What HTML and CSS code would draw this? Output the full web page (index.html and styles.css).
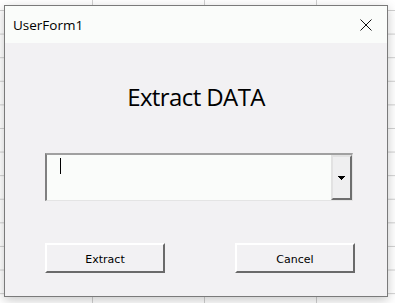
FILE: index.html
```html
<!DOCTYPE html>
<html lang="en">
<head>
  <meta charset="UTF-8" />
  <meta name="viewport" content="width=device-width, initial-scale=1.0"/>
  <title>UserForm1</title>
  <link rel="stylesheet" href="styles.css">
</head>
<body>
  <!-- UserForm window over the sheet grid -->
  <div class="form-window">
    <div class="title-bar">
      <span class="title">UserForm1</span>
      <svg class="close-icon" width="12" height="12" viewBox="0 0 12 12">
        <path d="M0.5 0.5 L11.5 11.5 M11.5 0.5 L0.5 11.5" stroke="#111" stroke-width="1" fill="none"/>
      </svg>
    </div>

    <div class="form-body">
      <h1>Extract DATA</h1>

      <!-- Combo box -->
      <div class="combo">
        <div class="combo-input"><span class="caret"></span></div>
        <div class="combo-button">
          <svg width="7" height="4" viewBox="0 0 7 4" shape-rendering="crispEdges">
            <path d="M0 0 H7 V1 H6 V2 H5 V3 H4 V4 H3 V3 H2 V2 H1 V1 H0 Z" fill="#000"/>
          </svg>
        </div>
      </div>

      <div class="actions">
        <button>Extract</button>
        <button>Cancel</button>
      </div>
    </div>
  </div>
</body>
</html>
```

FILE: styles.css
```css
body {
  margin: 0;
  height: 303px;
  overflow: hidden;
  box-sizing: border-box;
  padding: 5px 0 0 4px;
  background:
    linear-gradient(to right, #d0d0d0 1px, transparent 1px) 92px 0 / 112px 100%,
    linear-gradient(to bottom, #d0d0d0 1px, transparent 1px) 0 10px / 100% 23.6px,
    #fff;
}

.form-window {
  width: 384px;
  height: 292px;
  box-sizing: border-box;
  border: 1px solid #7a7a7a;
  box-shadow: 0 3px 10px rgba(0, 0, 0, 0.22);
  display: flex;
  flex-direction: column;
}

.title-bar {
  height: 37px;
  flex: none;
  background: #fafcfa;
  display: flex;
  align-items: center;
  justify-content: space-between;
  padding: 0 15px 0 8px;
  font-family: 'Open Sans', sans-serif;
  font-size: 13.5px;
  color: #000;
}

.close-icon {
  display: block;
}

.form-body {
  flex: 1;
  background: #f2f1f3;
}

h1 {
  margin: 0;
  padding-top: 38px;
  font-family: 'Open Sans', sans-serif;
  font-weight: 400;
  font-size: 24px;
  letter-spacing: -0.6px;
  line-height: 32px;
  text-align: center;
  color: #000;
}

.combo {
  margin: 40px 0 0 40px;
  width: 308px;
  height: 48px;
  box-sizing: border-box;
  border-style: solid;
  border-width: 2px 1px 1px 2px;
  border-color: #a0a0a0 #e4e4e4 #e4e4e4 #808080;
  background: #fafcfa;
  display: flex;
}

.combo-input {
  flex: 1;
  padding: 3px 0 0 13px;
}

.caret {
  display: block;
  width: 1px;
  height: 16px;
  background: #000;
}

.combo-button {
  width: 21px;
  box-sizing: border-box;
  border-style: solid;
  border-width: 2px;
  border-color: #e2e2e2 #6e6e6e #6e6e6e #e2e2e2;
  background: #efeff0;
  display: flex;
  align-items: center;
  justify-content: center;
}

.combo-button svg {
  display: block;
}

.actions {
  display: flex;
  justify-content: space-between;
  margin: 42px 32px 0 40px;
}

button {
  width: 120px;
  height: 30px;
  box-sizing: border-box;
  border-style: solid;
  border-width: 2px;
  border-color: #fff #6a6a6a #6a6a6a #fff;
  background: #f2f1f3;
  font-family: 'DejaVu Sans', sans-serif;
  font-size: 11px;
  color: #000;
  padding: 2px 0 0;
}
```
